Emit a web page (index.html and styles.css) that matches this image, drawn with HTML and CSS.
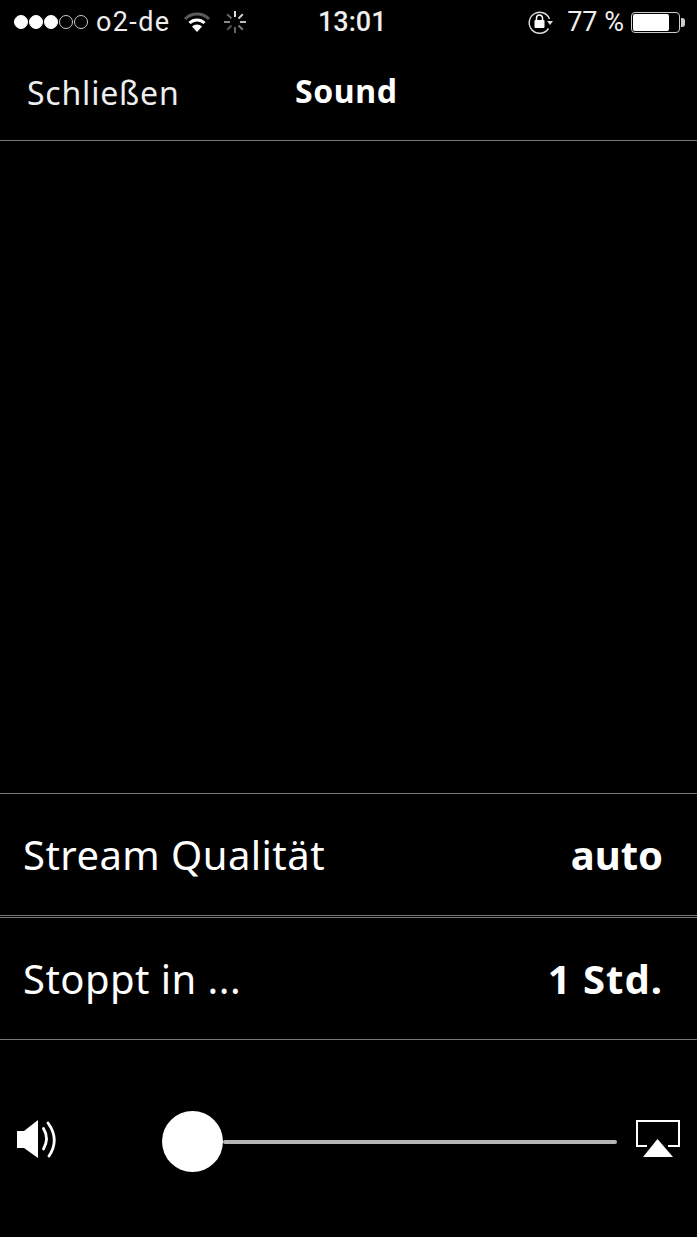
FILE: index.html
```html
<!doctype html>
<html lang="de">

<head>
    <meta charset="utf-8">
    <meta name="viewport" content="width=device-width, initial-scale=1">
    <title>Sound</title>

    <link rel="stylesheet" href="styles.css">

</head>

<body>
    <div class="status">
        <div class="status-left">
            <span class="dots">
                <i class="dot on"></i><i class="dot on"></i><i class="dot on"></i><i class="dot"></i><i class="dot"></i>
            </span>
            <span class="carrier">o2-de</span>
            <svg class="wifi" width="26" height="20" viewBox="0 0 26 20">
                <path d="M1 7 A17 17 0 0 1 25 7" fill="none" stroke="#5a5a5a" stroke-width="3"/>
                <path d="M5.5 11 A11 11 0 0 1 20.5 11" fill="none" stroke="#fff" stroke-width="3"/>
                <path d="M13 20 L8 14.5 A7 7 0 0 1 18 14.5 Z" fill="#fff"/>
            </svg>
            <svg class="spinner" width="24" height="24" viewBox="0 0 24 24" stroke-width="2">
                <path d="M12 1 V7" stroke="#ddd"/>
                <path d="M19.8 4.2 L15.5 8.5" stroke="#ccc"/>
                <path d="M23 12 H17" stroke="#bbb"/>
                <path d="M19.8 19.8 L15.5 15.5" stroke="#777"/>
                <path d="M12 23 V17" stroke="#666"/>
                <path d="M4.2 19.8 L8.5 15.5" stroke="#555"/>
                <path d="M1 12 H7" stroke="#888"/>
                <path d="M4.2 4.2 L8.5 8.5" stroke="#666"/>
            </svg>
        </div>
        <div class="clock">13:01</div>
        <div class="status-right">
            <svg class="rotlock" width="26" height="26" viewBox="0 0 26 26">
                <path d="M22.5 10 A10.5 10.5 0 1 0 21.5 19.5" fill="none" stroke="#ddd" stroke-width="1.4"/>
                <path d="M20 12 H26 L23 16 Z" fill="#ddd"/>
                <rect x="7.5" y="11" width="10" height="8" rx="1" fill="#fff"/>
                <path d="M9.5 11 V9 A3 3 0 0 1 15.5 9 V11" fill="none" stroke="#fff" stroke-width="1.5"/>
            </svg>
            <span class="percent">77 %</span>
            <span class="battery"><span class="battery-fill"></span></span>
            <span class="battery-tip"></span>
        </div>
    </div>

    <div class="nav">
        <div class="nav-close">Schließen</div>
        <div class="nav-title">Sound</div>
    </div>

    <div class="content"></div>

    <div class="row">
        <span class="row-label">Stream Qualität</span>
        <span class="row-value">auto</span>
    </div>
    <div class="row row-next">
        <span class="row-label">Stoppt in ...</span>
        <span class="row-value row-value-wide">1 Std.</span>
    </div>

    <div class="volume">
        <svg class="speaker" width="40" height="40" viewBox="0 0 40 40">
            <path d="M0 11 H7 L21 0 V38 L7 28 H0 Z" fill="#fff"/>
            <path d="M26.5 8.5 Q32.5 18.5 26.5 29" fill="none" stroke="#fff" stroke-width="2.8" stroke-linecap="round"/>
            <path d="M31 3 Q43 19.5 32 36" fill="none" stroke="#fff" stroke-width="2.8" stroke-linecap="round"/>
        </svg>
        <div class="slider">
            <div class="knob"></div>
            <div class="track"></div>
        </div>
        <svg class="airplay" width="44" height="38" viewBox="0 0 44 38">
            <path d="M11 26 H1 V1 H43 V26 H32" fill="none" stroke="#fff" stroke-width="2"/>
            <path d="M21.5 19 L37 37 H7 Z" fill="#fff"/>
        </svg>
    </div>
</body>

</html>
```

FILE: styles.css
```css
* {
    box-sizing: border-box;
}

body {
    margin: 0;
    height: 1237px;
    background-color: #000;
    color: #fff;
    font-family: "Noto Sans", Arial, sans-serif;
    overflow: hidden;
}

.status {
    height: 44px;
    display: flex;
    align-items: center;
    justify-content: space-between;
    padding: 0 12px 0 14px;
    font-family: Roboto, Arial, sans-serif;
    font-size: 27px;
    color: #eee;
    position: relative;
}

.status-left,
.status-right {
    display: flex;
    align-items: center;
}

.dots {
    display: flex;
    gap: 1px;
}

.dot {
    width: 14px;
    height: 14px;
    border-radius: 50%;
    border: 1px solid #ccc;
}

.dot.on {
    background-color: #fff;
    border-color: #fff;
}

.carrier {
    margin-left: 8px;
    letter-spacing: 1.4px;
}

.wifi {
    margin-left: 13px;
}

.spinner {
    margin-left: 13px;
}

.clock {
    position: absolute;
    left: 318px;
    top: 6px;
    font-weight: 500;
}

.percent {
    margin-left: 14px;
}

.battery {
    width: 49px;
    height: 21px;
    margin-left: 7px;
    border: 1.5px solid #ccc;
    border-radius: 4px;
    padding: 1px;
    display: flex;
}

.battery-fill {
    width: 36px;
    background-color: #fff;
    border-radius: 2px;
}

.battery-tip {
    width: 4px;
    height: 9px;
    margin-left: 1px;
    background-color: #ccc;
    border-radius: 0 3px 3px 0;
}

.nav {
    height: 97px;
    border-bottom: 1px solid #777;
    position: relative;
    display: flex;
    align-items: center;
}

.nav-close {
    margin-left: 27px;
    font-size: 32px;
    color: #eee;
    letter-spacing: .8px;
}

.nav-title {
    position: absolute;
    left: 295px;
    top: 25px;
    font-size: 32px;
    font-weight: 700;
    letter-spacing: .6px;
}

.content {
    height: 652px;
}

.row {
    height: 123px;
    border-top: 1px solid #777;
    border-bottom: 1px solid #777;
    display: flex;
    align-items: center;
    justify-content: space-between;
    padding: 0 34px 0 23px;
    font-size: 40px;
}

.row-next {
    margin-top: 1px;
}

.row-label {
    letter-spacing: .45px;
}

.row-value {
    font-weight: 700;
}

.row-value-wide {
    letter-spacing: 1px;
}

.volume {
    height: 197px;
    padding: 6px 17px 0 17px;
    display: flex;
    align-items: center;
}

.slider {
    flex: 1;
    display: flex;
    align-items: center;
    margin: 0 19px 0 105px;
}

.knob {
    width: 61px;
    height: 61px;
    border-radius: 50%;
    background-color: #fff;
}

.track {
    flex: 1;
    height: 4px;
    background-color: #b5b5b5;
    border-radius: 2px;
}

.speaker {
    flex: none;
    margin-bottom: 3px;
}

.airplay {
    flex: none;
    margin-bottom: 5px;
}
```
